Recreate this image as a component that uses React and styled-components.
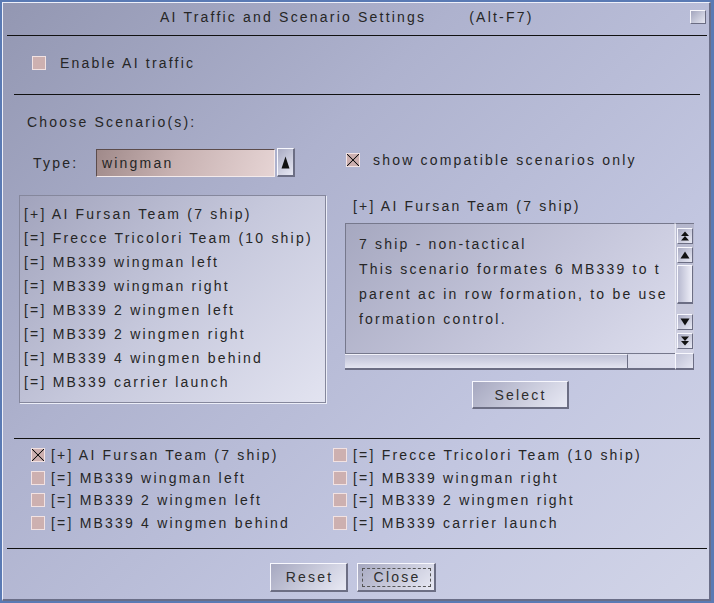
import React from 'react';
import styled, { createGlobalStyle } from 'styled-components';

const GlobalStyle = createGlobalStyle`
  html, body {
    margin: 0;
    padding: 0;
    background: #5a7ab4;
  }
  body {
    font-family: "Liberation Sans", Arial, sans-serif;
  }
`;

const Screen = styled.div`
  width: 714px;
  height: 603px;
  box-sizing: border-box;
  padding: 2px 3px 2px 2px;
  background: #5a7ab4;
`;

const Dialog = styled.div`
  height: 100%;
  box-sizing: border-box;
  display: flex;
  flex-direction: column;
  border-top: 1px solid #eef0fa;
  border-left: 1px solid #eef0fa;
  border-right: 2px solid #6a6e88;
  border-bottom: 2px solid #6a6e88;
  background: linear-gradient(135deg, #9397b2 0%, #aeb2ce 35%, #c2c6e0 70%, #d2d5e8 100%);
  color: #262626;
  font-size: 14px;
  letter-spacing: 2.2px;
`;

const TitleBar = styled.div`
  height: 32px;
  box-sizing: border-box;
  padding: 0 3px 4px 157px;
  display: flex;
  align-items: center;
`;

const Title = styled.span`
  display: flex;
  gap: 43px;
`;

const CloseBox = styled.div`
  margin-left: auto;
  width: 16px;
  height: 14px;
  box-sizing: border-box;
  border-top: 1px solid #f6f6fc;
  border-left: 1px solid #f6f6fc;
  border-right: 1px solid #6a6c82;
  border-bottom: 1px solid #6a6c82;
  background: linear-gradient(135deg, #a2a5bd, #e6e7f2);
`;

const Rule = styled.div`
  height: 1px;
  flex: none;
  background: #111;
  margin: ${p => p.$top || 0}px ${p => p.$right}px 0 ${p => p.$left}px;
`;

const EnableRow = styled.div`
  height: 58px;
  box-sizing: border-box;
  padding: 0 0 5px 29px;
  display: flex;
  align-items: center;
  gap: 14px;
`;

const Check = styled.span`
  flex: none;
  width: 14px;
  height: 14px;
  box-sizing: border-box;
  border: 1px solid #f2e2e2;
  background-color: #cdb0b0;
  background-image: ${p => p.$checked
    ? `linear-gradient(to top right, transparent calc(50% - 0.8px), #111 50%, transparent calc(50% + 0.8px)),
       linear-gradient(to bottom right, transparent calc(50% - 0.8px), #111 50%, transparent calc(50% + 0.8px))`
    : 'none'};
`;

const SectionLabel = styled.div`
  margin: 19px 0 0 24px;
  line-height: 16px;
`;

const TypeRow = styled.div`
  margin-top: 18px;
  padding-left: 30px;
  display: flex;
  align-items: center;
  height: 29px;
`;

const TypeLabel = styled.span`
  width: 63px;
`;

const Combo = styled.div`
  width: 179px;
  height: 28px;
  box-sizing: border-box;
  padding-left: 5px;
  display: flex;
  align-items: center;
  border-top: 1px solid #5c4c4c;
  border-left: 1px solid #5c4c4c;
  border-right: 1px solid #f4eaea;
  border-bottom: 1px solid #f4eaea;
  background: linear-gradient(110deg, #a08a8a 0%, #c8b2b2 45%, #e6d4d4 100%);
`;

const RaisedBox = styled.div`
  box-sizing: border-box;
  display: flex;
  align-items: center;
  justify-content: center;
  border-top: 1px solid #f8f8fe;
  border-left: 1px solid #f8f8fe;
  border-right: 2px solid #6c6e84;
  border-bottom: 2px solid #6c6e84;
  background: linear-gradient(135deg, #a9abc3, #e8e9f4);
`;

const ComboArrow = styled(RaisedBox)`
  width: 18px;
  height: 29px;
  margin-left: 2px;
`;

const CompatOption = styled.label`
  margin: 0 0 5px 51px;
  display: flex;
  align-items: center;
  gap: 13px;
`;

const ListsRow = styled.div`
  margin-top: 18px;
  padding-left: 16px;
  display: flex;
  gap: 19px;
`;

const ScenarioList = styled.ul`
  margin: 0;
  width: 307px;
  height: 208px;
  box-sizing: border-box;
  padding: 6px 0 0 4px;
  list-style: none;
  border: 1px solid #85879c;
  box-shadow: 1px 1px 0 #eceef8;
  background: linear-gradient(135deg, #a1a3bc 0%, #c6c8dc 50%, #e2e3f0 100%);
  line-height: 24px;
  white-space: nowrap;
`;

const DetailColumn = styled.div`
  width: 350px;
  display: flex;
  flex-direction: column;
`;

const DetailTitle = styled.div`
  margin: 3px 0 0 8px;
  line-height: 16px;
`;

const Viewer = styled.div`
  margin-top: 9px;
  display: grid;
  grid-template-columns: 330px 19px;
  grid-template-rows: 130px 17px;
`;

const TextPane = styled.div`
  box-sizing: border-box;
  padding: 8px 0 0 13px;
  border-top: 1px solid #76788c;
  border-left: 1px solid #76788c;
  border-right: 1px solid #d8d9e6;
  background: linear-gradient(135deg, #a6a8c0 0%, #c4c5da 55%, #dcdded 100%);
  line-height: 25px;
  white-space: nowrap;
  overflow: hidden;
`;

const VScroll = styled.div`
  box-sizing: border-box;
  padding: 4px 1px 4px 1px;
  display: flex;
  flex-direction: column;
  gap: 3px;
  border-top: 1px solid #76788c;
  border-left: 1px solid #e8e9f4;
  background: linear-gradient(180deg, #b4b6cc, #d2d3e4);
`;

const ScrollButton = styled(RaisedBox)`
  flex: none;
  height: 16px;
  border-right-width: 1px;
  border-bottom-width: 1px;
`;

const VThumb = styled(RaisedBox)`
  flex: none;
  height: 39px;
  margin-top: -1px;
  border-right-width: 1px;
  border-bottom-width: 2px;
  background: linear-gradient(90deg, #b8bad0, #eeeef8);
`;

const Spacer = styled.div`
  flex: 1;
`;

const HScroll = styled.div`
  box-sizing: border-box;
  display: flex;
  border-top: 1px solid #76788c;
  border-bottom: 2px solid #6c6e84;
  background: linear-gradient(90deg, #c4c6da, #dcddec);
`;

const HThumb = styled.div`
  width: 283px;
  box-sizing: border-box;
  border-top: 1px solid #f2f2fa;
  border-right: 1px solid #6c6e84;
  background: linear-gradient(180deg, #bfc1d6, #e4e5f1);
`;

const Corner = styled(RaisedBox)`
  border-right-width: 1px;
  background: linear-gradient(135deg, #c0c2d6, #e4e5f1);
`;

const PushButton = styled.button`
  box-sizing: border-box;
  height: ${p => p.$tall ? 29 : 28}px;
  width: ${p => p.$width}px;
  padding: 0 0 0 2px;
  font: inherit;
  letter-spacing: 2.2px;
  color: #2e2e2e;
  border-top: 1px solid #f8f8fe;
  border-left: 1px solid #f8f8fe;
  border-right: 2px solid #6c6e84;
  border-bottom: 2px solid #6c6e84;
  background: linear-gradient(135deg, #a6a8c0, #e8e9f4);
  outline: ${p => p.$focused ? '1px dashed #555' : 'none'};
  outline-offset: -6px;
`;

const SelectWrap = styled.div`
  margin-top: 11px;
  display: flex;
  justify-content: center;
`;

const PickGrid = styled.div`
  height: 109px;
  box-sizing: border-box;
  padding: 4.75px 0 0 28px;
  display: grid;
  grid-template-columns: 302px 1fr;
  grid-auto-rows: 22.5px;
`;

const PickItem = styled.label`
  display: flex;
  align-items: center;
  gap: 6px;
  white-space: nowrap;
`;

const Footer = styled.div`
  margin-top: 14px;
  padding-right: 6px;
  display: flex;
  justify-content: center;
  gap: 9px;
`;

const Tri = ({ down }) => (
  <svg width="10" height="8" viewBox="0 0 10 8">
    <path d={down ? 'M5 7.5 L9.5 0.5 H0.5 Z' : 'M5 0.5 L9.5 7.5 H0.5 Z'} fill="#111" />
  </svg>
);

const DoubleTri = ({ down }) => (
  <svg width="10" height="10" viewBox="0 0 10 10">
    <path
      d={down
        ? 'M5 5 L9 0.5 H1 Z M5 9.5 L9 5 H1 Z'
        : 'M5 0.5 L9 5 H1 Z M5 5 L9 9.5 H1 Z'}
      fill="#111"
    />
  </svg>
);

const scenarios = [
  '[+] AI Fursan Team (7 ship)',
  '[=] Frecce Tricolori Team (10 ship)',
  '[=] MB339 wingman left',
  '[=] MB339 wingman right',
  '[=] MB339 2 wingmen left',
  '[=] MB339 2 wingmen right',
  '[=] MB339 4 wingmen behind',
  '[=] MB339 carrier launch',
];

const description = [
  '7 ship - non-tactical',
  'This scenario formates 6 MB339 to t',
  'parent ac in row formation, to be use',
  'formation control.',
];

function App() {
  return (
    <Screen>
      <GlobalStyle />
      <Dialog>
        <TitleBar>
          <Title>
            <span>AI Traffic and Scenario Settings</span>
            <span>(Alt-F7)</span>
          </Title>
          <CloseBox />
        </TitleBar>
        <Rule $left={4} $right={2} />

        <EnableRow>
          <Check />
          <span>Enable AI traffic</span>
        </EnableRow>
        <Rule $left={11} $right={9} />

        <SectionLabel>Choose Scenario(s):</SectionLabel>

        <TypeRow>
          <TypeLabel>Type:</TypeLabel>
          <Combo>wingman</Combo>
          <ComboArrow>
            <svg width="9" height="13" viewBox="0 0 9 13">
              <path d="M4.5 0.5 L8.5 12.5 H0.5 Z" fill="#111" />
            </svg>
          </ComboArrow>
          <CompatOption>
            <Check $checked />
            <span>show compatible scenarios only</span>
          </CompatOption>
        </TypeRow>

        <ListsRow>
          <ScenarioList>
            {scenarios.map(s => <li key={s}>{s}</li>)}
          </ScenarioList>

          <DetailColumn>
            <DetailTitle>[+] AI Fursan Team (7 ship)</DetailTitle>
            <Viewer>
              <TextPane>
                {description.map(line => <div key={line}>{line}</div>)}
              </TextPane>
              <VScroll>
                <ScrollButton><DoubleTri /></ScrollButton>
                <ScrollButton><Tri /></ScrollButton>
                <VThumb />
                <Spacer />
                <ScrollButton><Tri down /></ScrollButton>
                <ScrollButton><DoubleTri down /></ScrollButton>
              </VScroll>
              <HScroll>
                <HThumb />
              </HScroll>
              <Corner />
            </Viewer>
            <SelectWrap>
              <PushButton $width={97}>Select</PushButton>
            </SelectWrap>
          </DetailColumn>
        </ListsRow>

        <Rule $left={11} $right={9} $top={29} />

        <PickGrid>
          {[0, 1, 2, 3].map(row => [0, 1].map(col => {
            const i = row * 2 + col;
            return (
              <PickItem key={i}>
                <Check $checked={i === 0} />
                <span>{scenarios[i]}</span>
              </PickItem>
            );
          }))}
        </PickGrid>
        <Rule $left={4} $right={2} />

        <Footer>
          <PushButton $width={78} $tall>Reset</PushButton>
          <PushButton $width={79} $tall $focused>Close</PushButton>
        </Footer>
      </Dialog>
    </Screen>
  );
}

export default App;
